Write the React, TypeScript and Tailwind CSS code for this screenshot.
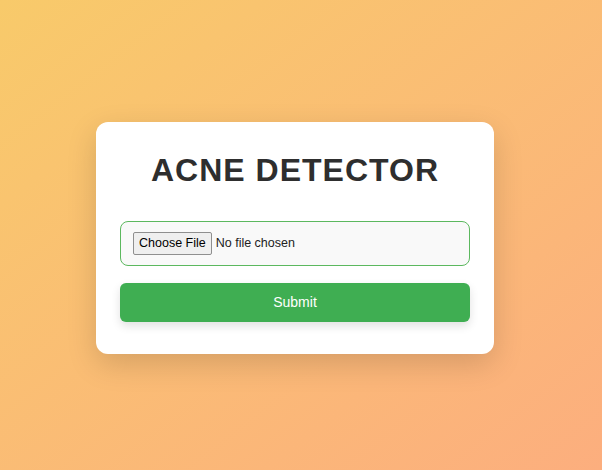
export default function App() {
  return (
    <div
      className="min-h-screen w-full flex items-center justify-center bg-gradient-to-br from-[#f8ca6a] to-[#fcae7e]"
      style={{ fontFamily: '"Liberation Sans", Arial, sans-serif' }}
    >
      <div className="w-[398px] h-[232px] mr-[12px] mt-[6px] bg-white rounded-[12px] shadow-[0_10px_30px_rgba(0,0,0,0.15)] px-[24px] pt-[28px]">
        <h1 className="text-center text-[32px] leading-[40px] font-bold tracking-[1px] text-[#2e2e2e]">
          ACNE DETECTOR
        </h1>
        <form className="mt-[31px] flex flex-col" onSubmit={(e) => e.preventDefault()}>
          <div className="h-[45px] flex items-center px-[12px] border border-[#5cb85f] rounded-[8px] bg-[#f9f9f9]">
            <input
              type="file"
              className="text-[12.5px] text-[#222] file:mr-[4px] file:px-[5px] file:py-[1px] file:border file:border-solid file:border-[#8f8f8f] file:rounded-[2px] file:bg-[#efefef] file:text-[12.5px] file:text-black"
            />
          </div>
          <button
            type="submit"
            className="mt-[17px] h-[39px] rounded-[6px] bg-[#3fae52] text-white text-[14px] shadow-[0_4px_10px_rgba(0,0,0,0.12)]"
          >
            Submit
          </button>
        </form>
      </div>
    </div>
  );
}
